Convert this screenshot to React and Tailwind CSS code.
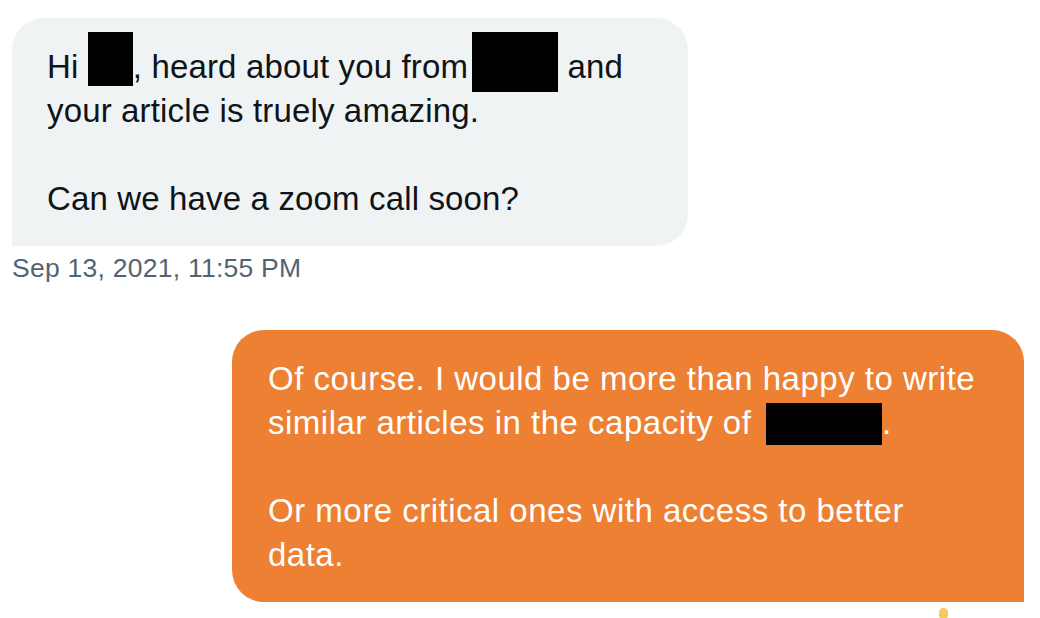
export default function App() {
  return (
    <div className="w-[1040px] h-[618px] overflow-hidden bg-white font-['Liberation_Sans',Arial,sans-serif]">
      <div className="pt-[18px] pl-[12px]">
        <div className="w-[676px] bg-[#eff3f4] text-[#0f1419] rounded-[32px] rounded-bl-none pl-[35px] pr-[20px] pt-[27px] pb-[25px] text-[33px] leading-[44px] tracking-[0.15px] whitespace-nowrap">
          Hi <span className="inline-block w-[45px] h-[54px] bg-black align-baseline mb-[-8px] mt-[-20px]"></span>, heard about you from<span className="inline-block w-[86px] h-[60px] bg-black align-baseline mb-[-14px] mt-[-20px] ml-[4px]"></span> and
          <br />
          your article is truely amazing.
          <br />
          <br />
          Can we have a zoom call soon?
        </div>
        <div className="mt-[6px] text-[26.5px] leading-[32px] tracking-[0.25px] text-[#536471]">Sep 13, 2021, 11:55 PM</div>
      </div>

      <div className="mt-[46px] pl-[232px]">
        <div className="w-[792px] bg-[#ed8032] text-white rounded-[32px] rounded-br-none pl-[36px] pr-[20px] pt-[27px] pb-[25px] text-[33px] leading-[44px] tracking-[0.5px] whitespace-nowrap">
          Of course. I would be more than happy to write
          <br />
          similar articles in the capacity of <span className="inline-block w-[116px] h-[42px] bg-black align-baseline mb-[-11px] mt-[-4px] ml-[5px]"></span>.
          <br />
          <br />
          Or more critical ones with access to better
          <br />
          data.
        </div>
        <div className="mt-[6px] ml-[707px] w-[9px] h-[12px] rounded-full bg-[#f3cb5a]"></div>
      </div>
    </div>
  );
}
